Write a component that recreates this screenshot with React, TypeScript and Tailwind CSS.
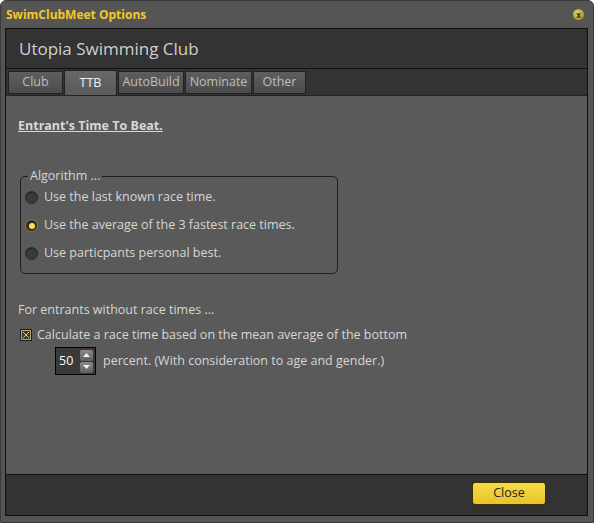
import { useState } from 'react';

const font = { fontFamily: '"Open Sans", "Noto Sans", sans-serif' };

function Radio({ checked, label, onClick }: { checked: boolean; label: string; onClick: () => void }) {
  return (
    <div onClick={onClick} className="flex items-center h-[28px] cursor-pointer">
      {checked ? (
        <span className="w-[13px] h-[13px] rounded-full bg-[#8a7c3c] flex items-center justify-center">
          <span className="w-[11px] h-[11px] rounded-full bg-[#2e2e2e] flex items-center justify-center">
            <span className="w-[6px] h-[6px] rounded-full bg-[#f6e44a]" />
          </span>
        </span>
      ) : (
        <span className="w-[13px] h-[13px] rounded-full bg-[#3a3a3a] border border-[#2a2a2a] shadow-[inset_0_1px_1px_rgba(0,0,0,0.4)]" />
      )}
      <span className="ml-[6px] text-[12.5px] text-[#d6d6d6]">{label}</span>
    </div>
  );
}

const tabs = [
  { name: 'Club', w: 'w-[55px]' },
  { name: 'TTB', w: 'w-[53px]' },
  { name: 'AutoBuild', w: 'w-[66px]' },
  { name: 'Nominate', w: 'w-[67px]' },
  { name: 'Other', w: 'w-[53px]' },
];

export default function App() {
  const [algo, setAlgo] = useState(1);
  const [tab, setTab] = useState('TTB');
  const [pct, setPct] = useState(50);

  return (
    <div style={font} className="w-[594px] h-[523px] bg-[#555555] border border-[#3a3a3a] rounded-t-[6px] flex flex-col overflow-hidden">
      {/* Title bar */}
      <div className="h-[27px] flex items-center justify-between pl-[5px] pr-[9px] shrink-0">
        <span className="text-[12px] font-bold text-[#f2c82a]">SwimClubMeet Options</span>
        <span className="w-[11px] h-[11px] rounded-full bg-[radial-gradient(circle_at_40%_35%,#e8d860,#8c7c1c)] flex items-center justify-center text-[8px] font-bold leading-none text-[#3a3200]">
          x
        </span>
      </div>

      {/* Inner window */}
      <div className="ml-[4px] mr-[5px] mb-[6px] flex-1 flex flex-col border border-[#111] bg-[#333333]">
        <div className="h-[40px] flex items-center pl-[13px] border-b border-[#111] shrink-0">
          <span className="text-[17px] text-[#cfcfcf]">Utopia Swimming Club</span>
        </div>

        <div className="h-[26px] flex items-end pl-[2px] gap-[1px] shrink-0">
          {tabs.map((t) =>
            t.name === tab ? (
              <div
                key={t.name}
                className={`${t.w} h-[25px] flex items-center justify-center text-[12.5px] text-[#f0f0f0] bg-gradient-to-b from-[#686868] to-[#5a5a5a] border-x border-t border-[#222] cursor-pointer`}
              >
                {t.name}
              </div>
            ) : (
              <div
                key={t.name}
                onClick={() => setTab(t.name)}
                className={`${t.w} h-[23px] mb-[1px] flex items-center justify-center text-[12.5px] text-[#bdbdbd] bg-gradient-to-b from-[#5e5e5e] to-[#4c4c4c] border border-[#222] cursor-pointer`}
              >
                {t.name}
              </div>
            )
          )}
        </div>

        {/* Content */}
        <div className="flex-1 bg-[#5a5a5a] border-t border-[#222] px-[12px] pt-[21px] flex flex-col">
          <span className="text-[12.5px] font-bold underline text-[#d8d8d8] self-start">Entrant's Time To Beat.</span>

          <div className="relative mt-[40px] ml-[2px] w-[318px] h-[98px] border border-[#1f1f1f] rounded-[5px] px-[4px] pt-[7px]">
            <span className="absolute -top-[10px] left-[7px] px-[2px] bg-[#5a5a5a] text-[12.5px] text-[#d6d6d6]">
              Algorithm ...
            </span>
            <Radio checked={algo === 0} label="Use the last known race time." onClick={() => setAlgo(0)} />
            <Radio checked={algo === 1} label="Use the average of the 3 fastest race times." onClick={() => setAlgo(1)} />
            <Radio checked={algo === 2} label="Use particpants personal best." onClick={() => setAlgo(2)} />
          </div>

          <span className="mt-[27px] text-[12.5px] text-[#d6d6d6]">For entrants without race times ...</span>

          <div className="mt-[6px] flex items-center ml-[2px]">
            <svg width="12" height="12" viewBox="0 0 12 12">
              <rect x="0.5" y="0.5" width="11" height="11" fill="#3a3a3a" stroke="#1e1e1e" />
              <rect x="1.5" y="1.5" width="9" height="9" fill="none" stroke="#b8a868" />
              <path d="M3 3 L9 9 M9 3 L3 9" stroke="#d8c870" strokeWidth="1" />
            </svg>
            <span className="ml-[5px] text-[12.5px] text-[#d6d6d6]">
              Calculate a race time based on the mean average of the bottom
            </span>
          </div>

          <div className="mt-[3px] flex items-center ml-[37px]">
            <div className="w-[41px] h-[28px] border border-black bg-[#3a3a3a] flex items-center pl-[3px]">
              <span className="text-[12.5px] text-white w-[20px]">{pct}</span>
              <div className="flex flex-col gap-[1px] ml-[1px]">
                <button
                  onClick={() => setPct(pct + 1)}
                  className="w-[13px] h-[11px] rounded-[2px] bg-gradient-to-b from-[#8a8a8a] to-[#5e5e5e] flex items-center justify-center"
                >
                  <svg width="7" height="4" viewBox="0 0 7 4"><path d="M0 4 L3.5 0 L7 4 Z" fill="#f0f0f0" /></svg>
                </button>
                <button
                  onClick={() => setPct(pct - 1)}
                  className="w-[13px] h-[11px] rounded-[2px] bg-gradient-to-b from-[#8a8a8a] to-[#5e5e5e] flex items-center justify-center"
                >
                  <svg width="7" height="4" viewBox="0 0 7 4"><path d="M0 0 L3.5 4 L7 0 Z" fill="#f0f0f0" /></svg>
                </button>
              </div>
            </div>
            <span className="ml-[7px] text-[12.5px] text-[#d6d6d6]">percent. (With consideration to age and gender.)</span>
          </div>
        </div>

        {/* Footer */}
        <div className="h-[41px] border-t border-[#111] flex justify-end items-start pt-[7px] pr-[41px] shrink-0">
          <button className="w-[74px] h-[23px] rounded-[3px] border border-[#3a3000] bg-gradient-to-b from-[#f8dc44] to-[#e8c22a] text-[12.5px] text-[#222]">
            Close
          </button>
        </div>
      </div>
    </div>
  );
}
